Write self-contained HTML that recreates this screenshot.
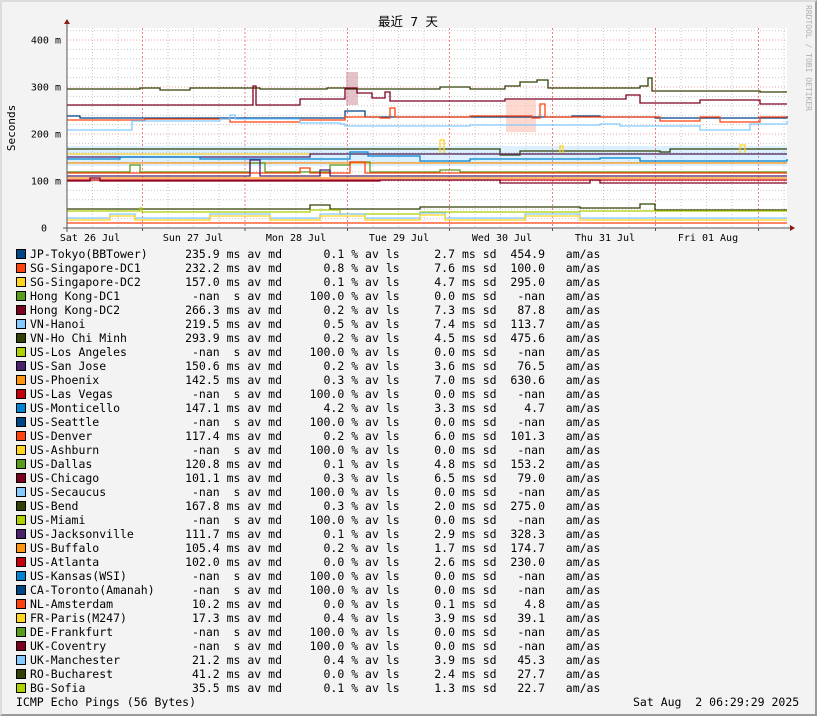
<!DOCTYPE html>
<html><head><meta charset="utf-8"><style>
html,body{margin:0;padding:0}
body{width:817px;height:716px;background:#f3f3f3;position:relative;overflow:hidden;font-family:"DejaVu Sans Mono","Liberation Mono",monospace;font-size:11.5px;color:#000}
.frame{position:absolute;left:0;top:0;border-left:2px solid #dcdcdc;border-top:2px solid #dcdcdc;border-right:2px solid #9a9a9a;border-bottom:2px solid #9a9a9a;width:813px;height:712px}
svg{position:absolute;left:0;top:0}
.leg{position:absolute;left:16px;top:247px}
.r{height:14px;line-height:14px;white-space:pre;position:relative}
.r i{position:absolute;left:0;top:2px;width:8px;height:8px;border:1px solid #000}
.r span{display:inline-block;white-space:pre}
.n{margin-left:14px;width:22.4ch}
.a{width:5ch;text-align:right}
.s{width:8ch;text-align:right}
.b{width:9ch}
.c{width:9ch;text-align:right}
.d{width:8ch}
.e{width:6ch}
.f{width:7ch;text-align:right}
.foot{position:absolute;left:16px;top:695px;white-space:pre;line-height:14px}
.date{position:absolute;left:633px;top:695px;white-space:pre;line-height:14px}
</style></head><body>
<div class="frame"></div>
<svg width="817" height="245" xmlns="http://www.w3.org/2000/svg">
<rect x="67" y="28" width="720" height="200" fill="#ffffff"/>
<g stroke="#c8c8c8" stroke-width="1" stroke-dasharray="1,2">
<path d="M67 218.6H787M67 209.2H787M67 199.8H787M67 190.4H787M67 171.6H787M67 162.2H787M67 152.8H787M67 143.4H787M67 124.6H787M67 115.2H787M67 105.8H787M67 96.4H787M67 77.6H787M67 68.2H787M67 58.8H787M67 49.4H787M67 30.6H787"/>
<path d="M92.5 28V228M118 28V228M168 28V228M193.5 28V228M219 28V228M270 28V228M296 28V228M321 28V228M373 28V228M398.5 28V228M424 28V228M475 28V228M500.5 28V228M526 28V228M578 28V228M603.5 28V228M629 28V228M681 28V228M706.5 28V228M732 28V228M784 28V228"/>
</g>
<g stroke="#e8a0a0" stroke-width="1" stroke-dasharray="1,2">
<path d="M67 181H787M67 134H787M67 87H787M67 40H787"/>
</g>
<g stroke="#f08080" stroke-width="1" stroke-dasharray="2,2">
<path d="M142.5 28V228M245 28V228M347.5 28V228M449.5 28V228M552.5 28V228M655.5 28V228M758.5 28V228"/>
</g>
<rect x="346" y="72" width="12" height="33" fill="#d8a8b4" opacity=".7"/>
<rect x="506" y="100" width="30" height="32" fill="#ffc0b0" opacity=".6"/>
<rect x="67" y="146" width="720" height="20" fill="#83caff" opacity=".28"/>
<g fill="none" stroke-width="1.3">
<path stroke="#314004" d="M67 89H140V88H160V90H190V88H260V89H327V88H346V89H440V87H470V89H505V86H520V82H537V80H548V88H640V86H648V78H652V91H760V92H787"/>
<path stroke="#7e0021" d="M67 105H253V86H256V105H300V99H345V88H357V93H372V98H385V92H390V101H430V101H505V99H515V99H626V95H640V103H700V100H760V104H787"/>
<path stroke="#004586" d="M67 116H80V118H345V111H365V117H572V116H600V117H655V118H787V116"/>
<path stroke="#ff420e" d="M67 120H145V119H230V122H300V120H345V117H380V118H390V108H395V117H470V116H532V118H540V104H545V117H660V121H700V117H720V122H760V117H787"/>
<path stroke="#83caff" d="M67 130H132V121H220V119H230V115H235V119H300V123H340V124H345V126H470V125H600V124H620V126H700V130H750V124H787V121"/>
<path stroke="#314004" d="M67 149H500V155H520V151H660V152H670V149H787"/>
<path stroke="#ffd320" d="M67 154H440V140H444V154H560V146H563V154H740V145H745V154H787"/>
<path stroke="#4b1f6f" d="M67 157H310V154H787"/>
<path stroke="#0084d1" d="M67 159H120V157H200V159H350V152H368V156H420V161H470V159H600V158H640V161H787V159"/>
<path stroke="#ff950e" d="M67 163H787"/>
<path stroke="#579d1c" d="M67 172H130V165H140V172H250V163H265V172H330V165H350V162H370V172H440V170H460V172H787"/>
<path stroke="#ff420e" d="M67 173H300V168H310V173H350V162H365V173H787"/>
<path stroke="#4b1f6f" d="M67 176H250V160H260V176H320V170H330V176H787"/>
<path stroke="#ff950e" d="M67 178H787"/>
<path stroke="#c5000b" d="M67 180H787"/>
<path stroke="#7e0021" d="M67 181H90V178H100V181H380V180H500V183H590V180H600V183H787"/>
<path stroke="#314004" d="M67 209H310V205H330V209H420V207H580V208H640V204H655V210H787"/>
<path stroke="#aecf00" d="M67 211H140V208H142V212H310V210H340V214H420V212H580V211H787"/>
<path stroke="#83caff" d="M67 218H110V214H135V218H210V214H270V218H320V214H365V218H420V213H445V218H525V214H580V218H787"/>
<path stroke="#ffd320" d="M67 220H110V216H135V220H210V216H270V220H320V216H365V220H420V215H445V220H525V216H580V220H787"/>
<path stroke="#ff420e" d="M67 223H787"/>
</g>
<g stroke="#555" stroke-width="1"><path d="M63 228H790M67 232V22"/></g>
<path d="M790 225L795 228L790 231Z" fill="#8b1a1a"/>
<path d="M64 24L67 19L70 24Z" fill="#8b1a1a"/>
<g stroke="#555"><path d="M142.5 228V231M245 228V231M347.5 228V231M449.5 228V231M552.5 228V231M655.5 228V231M758.5 228V231"/></g>
<g font-family="DejaVu Sans Mono, Liberation Mono, monospace" font-size="10" fill="#000" text-anchor="end">
<text x="61" y="43.5">400 m</text><text x="61" y="90.5">300 m</text><text x="61" y="137.5">200 m</text><text x="61" y="184.5">100 m</text><text x="47" y="231.5">0</text>
</g>
<g font-family="DejaVu Sans Mono, Liberation Mono, monospace" font-size="10" fill="#000" text-anchor="middle">
<text x="90" y="241">Sat 26 Jul</text><text x="193" y="241">Sun 27 Jul</text><text x="296" y="241">Mon 28 Jul</text><text x="399" y="241">Tue 29 Jul</text><text x="502" y="241">Wed 30 Jul</text><text x="605" y="241">Thu 31 Jul</text><text x="708" y="241">Fri 01 Aug</text>
</g>
<text x="408" y="26" text-anchor="middle" font-family="DejaVu Sans Mono, Noto Sans CJK SC, monospace" font-size="12.5" fill="#000" xml:space="preserve">最近 7 天</text>
<text transform="translate(15 128) rotate(-90)" text-anchor="middle" font-family="DejaVu Sans Mono, monospace" font-size="11" fill="#000">Seconds</text>
<text transform="translate(806 5) rotate(90)" font-family="DejaVu Sans Mono, monospace" font-size="8" fill="#b0b0b0">RRDTOOL / TOBI OETIKER</text>
</svg>
<div class="leg">
<div class="r"><i style="background:#004586"></i><span class="n">JP-Tokyo(BBTower)</span><span class="a">235.9</span><span class="b"> ms av md</span><span class="c">0.1</span><span class="d"> % av ls</span><span class="s">2.7</span><span class="e"> ms sd</span><span class="f">454.9</span><span>   am/as</span></div>
<div class="r"><i style="background:#ff420e"></i><span class="n">SG-Singapore-DC1</span><span class="a">232.2</span><span class="b"> ms av md</span><span class="c">0.8</span><span class="d"> % av ls</span><span class="s">7.6</span><span class="e"> ms sd</span><span class="f">100.0</span><span>   am/as</span></div>
<div class="r"><i style="background:#ffd320"></i><span class="n">SG-Singapore-DC2</span><span class="a">157.0</span><span class="b"> ms av md</span><span class="c">0.1</span><span class="d"> % av ls</span><span class="s">4.7</span><span class="e"> ms sd</span><span class="f">295.0</span><span>   am/as</span></div>
<div class="r"><i style="background:#579d1c"></i><span class="n">Hong Kong-DC1</span><span class="a">-nan</span><span class="b">  s av md</span><span class="c">100.0</span><span class="d"> % av ls</span><span class="s">0.0</span><span class="e"> ms sd</span><span class="f">-nan</span><span>   am/as</span></div>
<div class="r"><i style="background:#7e0021"></i><span class="n">Hong Kong-DC2</span><span class="a">266.3</span><span class="b"> ms av md</span><span class="c">0.2</span><span class="d"> % av ls</span><span class="s">7.3</span><span class="e"> ms sd</span><span class="f">87.8</span><span>   am/as</span></div>
<div class="r"><i style="background:#83caff"></i><span class="n">VN-Hanoi</span><span class="a">219.5</span><span class="b"> ms av md</span><span class="c">0.5</span><span class="d"> % av ls</span><span class="s">7.4</span><span class="e"> ms sd</span><span class="f">113.7</span><span>   am/as</span></div>
<div class="r"><i style="background:#314004"></i><span class="n">VN-Ho Chi Minh</span><span class="a">293.9</span><span class="b"> ms av md</span><span class="c">0.2</span><span class="d"> % av ls</span><span class="s">4.5</span><span class="e"> ms sd</span><span class="f">475.6</span><span>   am/as</span></div>
<div class="r"><i style="background:#aecf00"></i><span class="n">US-Los Angeles</span><span class="a">-nan</span><span class="b">  s av md</span><span class="c">100.0</span><span class="d"> % av ls</span><span class="s">0.0</span><span class="e"> ms sd</span><span class="f">-nan</span><span>   am/as</span></div>
<div class="r"><i style="background:#4b1f6f"></i><span class="n">US-San Jose</span><span class="a">150.6</span><span class="b"> ms av md</span><span class="c">0.2</span><span class="d"> % av ls</span><span class="s">3.6</span><span class="e"> ms sd</span><span class="f">76.5</span><span>   am/as</span></div>
<div class="r"><i style="background:#ff950e"></i><span class="n">US-Phoenix</span><span class="a">142.5</span><span class="b"> ms av md</span><span class="c">0.3</span><span class="d"> % av ls</span><span class="s">7.0</span><span class="e"> ms sd</span><span class="f">630.6</span><span>   am/as</span></div>
<div class="r"><i style="background:#c5000b"></i><span class="n">US-Las Vegas</span><span class="a">-nan</span><span class="b">  s av md</span><span class="c">100.0</span><span class="d"> % av ls</span><span class="s">0.0</span><span class="e"> ms sd</span><span class="f">-nan</span><span>   am/as</span></div>
<div class="r"><i style="background:#0084d1"></i><span class="n">US-Monticello</span><span class="a">147.1</span><span class="b"> ms av md</span><span class="c">4.2</span><span class="d"> % av ls</span><span class="s">3.3</span><span class="e"> ms sd</span><span class="f">4.7</span><span>   am/as</span></div>
<div class="r"><i style="background:#004586"></i><span class="n">US-Seattle</span><span class="a">-nan</span><span class="b">  s av md</span><span class="c">100.0</span><span class="d"> % av ls</span><span class="s">0.0</span><span class="e"> ms sd</span><span class="f">-nan</span><span>   am/as</span></div>
<div class="r"><i style="background:#ff420e"></i><span class="n">US-Denver</span><span class="a">117.4</span><span class="b"> ms av md</span><span class="c">0.2</span><span class="d"> % av ls</span><span class="s">6.0</span><span class="e"> ms sd</span><span class="f">101.3</span><span>   am/as</span></div>
<div class="r"><i style="background:#ffd320"></i><span class="n">US-Ashburn</span><span class="a">-nan</span><span class="b">  s av md</span><span class="c">100.0</span><span class="d"> % av ls</span><span class="s">0.0</span><span class="e"> ms sd</span><span class="f">-nan</span><span>   am/as</span></div>
<div class="r"><i style="background:#579d1c"></i><span class="n">US-Dallas</span><span class="a">120.8</span><span class="b"> ms av md</span><span class="c">0.1</span><span class="d"> % av ls</span><span class="s">4.8</span><span class="e"> ms sd</span><span class="f">153.2</span><span>   am/as</span></div>
<div class="r"><i style="background:#7e0021"></i><span class="n">US-Chicago</span><span class="a">101.1</span><span class="b"> ms av md</span><span class="c">0.3</span><span class="d"> % av ls</span><span class="s">6.5</span><span class="e"> ms sd</span><span class="f">79.0</span><span>   am/as</span></div>
<div class="r"><i style="background:#83caff"></i><span class="n">US-Secaucus</span><span class="a">-nan</span><span class="b">  s av md</span><span class="c">100.0</span><span class="d"> % av ls</span><span class="s">0.0</span><span class="e"> ms sd</span><span class="f">-nan</span><span>   am/as</span></div>
<div class="r"><i style="background:#314004"></i><span class="n">US-Bend</span><span class="a">167.8</span><span class="b"> ms av md</span><span class="c">0.3</span><span class="d"> % av ls</span><span class="s">2.0</span><span class="e"> ms sd</span><span class="f">275.0</span><span>   am/as</span></div>
<div class="r"><i style="background:#aecf00"></i><span class="n">US-Miami</span><span class="a">-nan</span><span class="b">  s av md</span><span class="c">100.0</span><span class="d"> % av ls</span><span class="s">0.0</span><span class="e"> ms sd</span><span class="f">-nan</span><span>   am/as</span></div>
<div class="r"><i style="background:#4b1f6f"></i><span class="n">US-Jacksonville</span><span class="a">111.7</span><span class="b"> ms av md</span><span class="c">0.1</span><span class="d"> % av ls</span><span class="s">2.9</span><span class="e"> ms sd</span><span class="f">328.3</span><span>   am/as</span></div>
<div class="r"><i style="background:#ff950e"></i><span class="n">US-Buffalo</span><span class="a">105.4</span><span class="b"> ms av md</span><span class="c">0.2</span><span class="d"> % av ls</span><span class="s">1.7</span><span class="e"> ms sd</span><span class="f">174.7</span><span>   am/as</span></div>
<div class="r"><i style="background:#c5000b"></i><span class="n">US-Atlanta</span><span class="a">102.0</span><span class="b"> ms av md</span><span class="c">0.0</span><span class="d"> % av ls</span><span class="s">2.6</span><span class="e"> ms sd</span><span class="f">230.0</span><span>   am/as</span></div>
<div class="r"><i style="background:#0084d1"></i><span class="n">US-Kansas(WSI)</span><span class="a">-nan</span><span class="b">  s av md</span><span class="c">100.0</span><span class="d"> % av ls</span><span class="s">0.0</span><span class="e"> ms sd</span><span class="f">-nan</span><span>   am/as</span></div>
<div class="r"><i style="background:#004586"></i><span class="n">CA-Toronto(Amanah)</span><span class="a">-nan</span><span class="b">  s av md</span><span class="c">100.0</span><span class="d"> % av ls</span><span class="s">0.0</span><span class="e"> ms sd</span><span class="f">-nan</span><span>   am/as</span></div>
<div class="r"><i style="background:#ff420e"></i><span class="n">NL-Amsterdam</span><span class="a">10.2</span><span class="b"> ms av md</span><span class="c">0.0</span><span class="d"> % av ls</span><span class="s">0.1</span><span class="e"> ms sd</span><span class="f">4.8</span><span>   am/as</span></div>
<div class="r"><i style="background:#ffd320"></i><span class="n">FR-Paris(M247)</span><span class="a">17.3</span><span class="b"> ms av md</span><span class="c">0.4</span><span class="d"> % av ls</span><span class="s">3.9</span><span class="e"> ms sd</span><span class="f">39.1</span><span>   am/as</span></div>
<div class="r"><i style="background:#579d1c"></i><span class="n">DE-Frankfurt</span><span class="a">-nan</span><span class="b">  s av md</span><span class="c">100.0</span><span class="d"> % av ls</span><span class="s">0.0</span><span class="e"> ms sd</span><span class="f">-nan</span><span>   am/as</span></div>
<div class="r"><i style="background:#7e0021"></i><span class="n">UK-Coventry</span><span class="a">-nan</span><span class="b">  s av md</span><span class="c">100.0</span><span class="d"> % av ls</span><span class="s">0.0</span><span class="e"> ms sd</span><span class="f">-nan</span><span>   am/as</span></div>
<div class="r"><i style="background:#83caff"></i><span class="n">UK-Manchester</span><span class="a">21.2</span><span class="b"> ms av md</span><span class="c">0.4</span><span class="d"> % av ls</span><span class="s">3.9</span><span class="e"> ms sd</span><span class="f">45.3</span><span>   am/as</span></div>
<div class="r"><i style="background:#314004"></i><span class="n">RO-Bucharest</span><span class="a">41.2</span><span class="b"> ms av md</span><span class="c">0.0</span><span class="d"> % av ls</span><span class="s">2.4</span><span class="e"> ms sd</span><span class="f">27.7</span><span>   am/as</span></div>
<div class="r"><i style="background:#aecf00"></i><span class="n">BG-Sofia</span><span class="a">35.5</span><span class="b"> ms av md</span><span class="c">0.1</span><span class="d"> % av ls</span><span class="s">1.3</span><span class="e"> ms sd</span><span class="f">22.7</span><span>   am/as</span></div>
</div>
<div class="foot">ICMP Echo Pings (56 Bytes)</div>
<div class="date">Sat Aug  2 06:29:29 2025</div>
</body></html>
